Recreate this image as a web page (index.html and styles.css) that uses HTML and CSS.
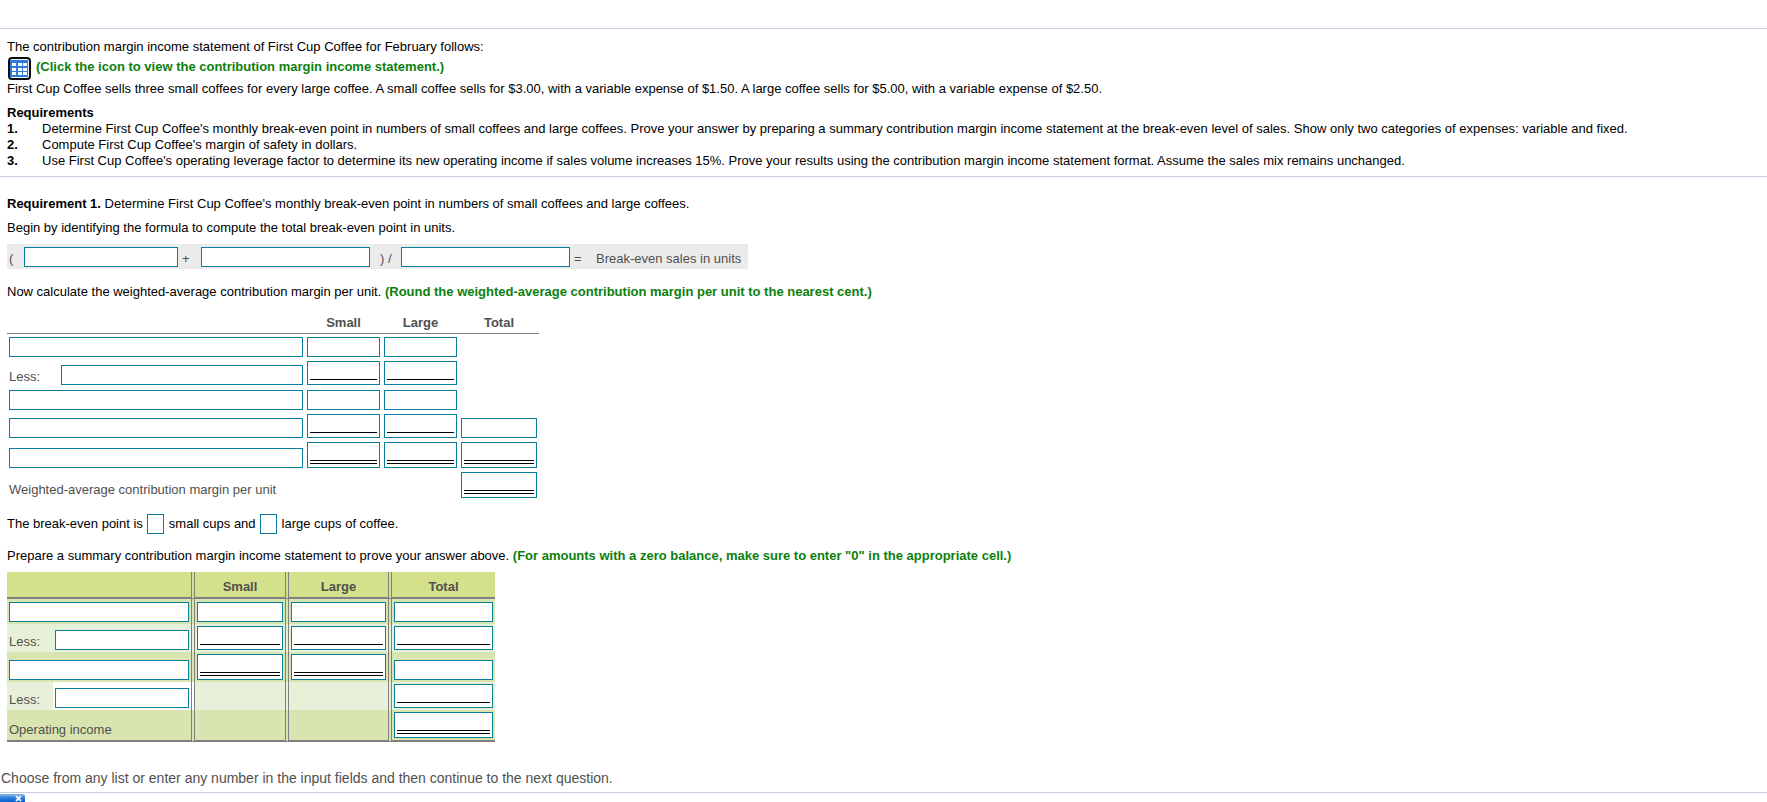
FILE: index.html
```html
<!DOCTYPE html>
<html lang="en">
<head>
<meta charset="utf-8">
<title>First Cup Coffee</title>
<link rel="stylesheet" href="styles.css">
</head>
<body>
<header class="topbar"></header>
<main>
<section class="problem">
  <p>The contribution margin income statement of First Cup Coffee for February follows:</p>
  <a class="statement-link" href="#statement">
    <svg width="23" height="23" viewBox="0 0 23 23" aria-hidden="true">
      <rect x="1" y="1" width="21" height="21" rx="3" fill="#eef4ff" stroke="#0b0d12" stroke-width="2"/>
      <rect x="2" y="3" width="18" height="17" rx="1" fill="#2f7bdc"/>
      <path d="M4 6h4v3H4zM10 6h4v3h-4zM15 6h4v3h-4zM4 11h4v3H4zM10 11h4v3h-4zM15 11h4v3h-4zM4 15h4v3H4zM10 15h4v3h-4zM15 15h4v3h-4z" fill="#fff"/>
    </svg>
    <span>(Click the icon to view the contribution margin income statement.)</span>
  </a>
  <p>First Cup Coffee sells three small coffees for every large coffee. A small coffee sells for $3.00, with a variable expense of $1.50. A large coffee sells for $5.00, with a variable expense of $2.50.</p>
  <h2>Requirements</h2>
  <ol class="requirements">
    <li><b>1.</b><span>Determine First Cup Coffee's monthly break-even point in numbers of small coffees and large coffees. Prove your answer by preparing a summary contribution margin income statement at the break-even level of sales. Show only two categories of expenses: variable and fixed.</span></li>
    <li><b>2.</b><span>Compute First Cup Coffee's margin of safety in dollars.</span></li>
    <li><b>3.</b><span>Use First Cup Coffee's operating leverage factor to determine its new operating income if sales volume increases 15%. Prove your results using the contribution margin income statement format. Assume the sales mix remains unchanged.</span></li>
  </ol>
</section>
<section class="work">
  <p><b>Requirement 1.</b> Determine First Cup Coffee's monthly break-even point in numbers of small coffees and large coffees.</p>
  <p>Begin by identifying the formula to compute the total break-even point in units.</p>
  <div class="formula">
    <span class="open">(</span>
    <input class="box first" aria-label="First term">
    <span class="plus">+</span>
    <input class="box" aria-label="Second term">
    <span class="divide">) /</span>
    <input class="box" aria-label="Divisor">
    <span class="equals">=</span>
    <span class="result">Break-even sales in units</span>
  </div>
  <p class="lead">Now calculate the weighted-average contribution margin per unit. <b class="hint">(Round the weighted-average contribution margin per unit to the nearest cent.)</b></p>

  <table class="average">
    <colgroup><col class="less"><col class="name"><col class="num"><col class="num"><col class="total"></colgroup>
    <thead><tr><th colspan="2"></th><th>Small</th><th>Large</th><th>Total</th></tr></thead>
    <tbody>
      <tr class="plain"><td colspan="2"><input class="box" aria-label="Row 1 item"></td><td><input class="box" aria-label="Row 1 small"></td><td><input class="box" aria-label="Row 1 large"></td><td></td></tr>
      <tr class="single"><td>Less:</td><td><input class="box" aria-label="Row 2 item"></td><td><div class="sum"><input aria-label="Row 2 small"></div></td><td><div class="sum"><input aria-label="Row 2 large"></div></td><td></td></tr>
      <tr class="plain"><td colspan="2"><input class="box" aria-label="Row 3 item"></td><td><input class="box" aria-label="Row 3 small"></td><td><input class="box" aria-label="Row 3 large"></td><td></td></tr>
      <tr class="single"><td colspan="2"><input class="box" aria-label="Row 4 item"></td><td><div class="sum"><input aria-label="Row 4 small"></div></td><td><div class="sum"><input aria-label="Row 4 large"></div></td><td><input class="box" aria-label="Row 4 total"></td></tr>
      <tr class="final"><td colspan="2"><input class="box" aria-label="Row 5 item"></td><td><div class="sum grand"><input aria-label="Row 5 small"></div></td><td><div class="sum grand"><input aria-label="Row 5 large"></div></td><td><div class="sum grand"><input aria-label="Row 5 total"></div></td></tr>
      <tr class="final"><td colspan="2">Weighted-average contribution margin per unit</td><td></td><td></td><td><div class="sum grand"><input aria-label="Weighted-average contribution margin per unit"></div></td></tr>
    </tbody>
  </table>

  <div class="sentence">
    <label for="small-cups">The break-even point is</label>
    <input class="box" id="small-cups">
    <label for="large-cups">small cups and</label>
    <input class="box" id="large-cups">
    <span>large cups of coffee.</span>
  </div>
  <p class="prepare">Prepare a summary contribution margin income statement to prove your answer above. <b class="hint">(For amounts with a zero balance, make sure to enter "0" in the appropriate cell.)</b></p>

  <table class="summary">
    <colgroup><col class="less"><col class="name"><col class="small"><col class="large"><col class="total"></colgroup>
    <thead><tr><th colspan="2"></th><th>Small</th><th>Large</th><th>Total</th></tr></thead>
    <tbody>
      <tr class="plain"><td colspan="2"><input class="box" aria-label="Line 1 item"></td><td><input class="box" aria-label="Line 1 small"></td><td><input class="box" aria-label="Line 1 large"></td><td><input class="box" aria-label="Line 1 total"></td></tr>
      <tr class="single"><td class="joined">Less:</td><td><input class="box" aria-label="Line 2 item"></td><td><div class="sum"><input aria-label="Line 2 small"></div></td><td><div class="sum"><input aria-label="Line 2 large"></div></td><td><div class="sum"><input aria-label="Line 2 total"></div></td></tr>
      <tr class="final"><td colspan="2"><input class="box" aria-label="Line 3 item"></td><td><div class="sum grand"><input aria-label="Line 3 small"></div></td><td><div class="sum grand"><input aria-label="Line 3 large"></div></td><td><input class="box" aria-label="Line 3 total"></td></tr>
      <tr class="single"><td class="joined">Less:</td><td class="blank"><input class="box" aria-label="Line 4 item"></td><td></td><td></td><td><div class="sum"><input aria-label="Line 4 total"></div></td></tr>
      <tr class="final"><td colspan="2">Operating income</td><td></td><td></td><td><div class="sum grand"><input aria-label="Operating income"></div></td></tr>
    </tbody>
  </table>
</section>
</main>
<footer class="status">Choose from any list or enter any number in the input fields and then continue to the next question.</footer>
<svg class="tab" width="25" height="8" viewBox="0 0 25 8" aria-hidden="true">
  <defs><linearGradient id="blue" x2="0" y2="1"><stop offset="0" stop-color="#8db9ea"/><stop offset=".5" stop-color="#2b7bd8"/><stop offset="1" stop-color="#0b62cf"/></linearGradient></defs>
  <path d="M0 0h23q2 0 2 2v6H0z" fill="url(#blue)"/>
  <path d="M16 2l5 5M21 2l-5 5" stroke="#e8f2ff" stroke-width="2"/>
</svg>
</body>
</html>
```
FILE: styles.css
```css
* { box-sizing: border-box; }
body {
  margin: 0;
  background: #fff;
  color: #000;
  font: 13px/16px "Liberation Sans", Arial, sans-serif;
  overflow: hidden;
}
p, h2, ol { margin: 0; }
h2 { font-size: 13px; }

.topbar { height: 29px; border-bottom: 1px solid #c8cde0; }
.problem { padding: 10px 7px 7px; border-bottom: 1px solid #c8cde0; }
.statement-link {
  display: flex;
  gap: 5px;
  margin: 2px 0 1px 1px;
  color: #0c800c;
  font-weight: bold;
  text-decoration: none;
}
.statement-link span { padding-top: 2px; }
.problem h2 { margin-top: 8px; }
.requirements { padding: 0; list-style: none; }
.requirements li { display: flex; }
.requirements b { flex: none; width: 35px; }

.work { padding: 19px 7px 0; }
.work > p + p { margin-top: 8px; }
.hint { color: #0c800c; }

input { min-width: 0; margin: 0; padding: 0 2px; border: 0; background: #fff; font: inherit; }
.box { display: block; width: 100%; height: 20px; border: 1px solid #0a7f9c; }

.formula {
  display: flex;
  width: max-content;
  margin-top: 8px;
  padding: 3px 7px 2px 2px;
  background: #ebebeb;
  color: #505050;
}
.formula span { padding-top: 4px; }
.formula .open { width: 15px; }
.formula .box { width: 169px; }
.formula .first { width: 154px; }
.formula .plus { width: 23px; padding-left: 4px; }
.formula .divide { width: 31px; padding-left: 10px; }
.formula .equals { width: 26px; padding-left: 4px; }
.work .lead { margin-top: 15px; }

table { border-collapse: separate; border-spacing: 0; table-layout: fixed; color: #505050; }
th, td { height: 25px; padding: 0 2px 2px; text-align: center; vertical-align: bottom; }
td { text-align: left; }
.single td { height: 28px; }
.final td { height: 30px; }
.sum { height: 24px; padding: 0 2px 4px; border: 1px solid #0a7f9c; background: #fff; }
.sum input { display: block; width: 100%; height: 100%; border-bottom: 1px solid #000; }
.grand { height: 26px; padding-bottom: 3px; }
.grand input { border-bottom: 4px double #000; }

.average { width: 532px; margin-top: 9px; }
.average th { border-bottom: 1px solid #808080; }
.average .less { width: 52px; }
.average .name { width: 246px; }
.average .num { width: 77px; }
.average .total { width: 80px; }

.sentence { display: flex; align-items: center; margin-top: 14px; }
.sentence .box { width: 17px; margin: 0 5px 0 4px; }
.work .prepare { margin: 14px 0 8px; }

.summary { width: 488px; }
.summary .less { width: 46px; }
.summary .name { width: 142px; }
.summary .small { width: 94px; }
.summary .large, .summary .total { width: 103px; }
.summary th, .summary td { border-right: 4px double #808080; }
.summary th:last-child, .summary td:last-child, .summary .joined { border-right: 0; }
.summary th { height: 27px; border-bottom: 2px solid #808080; background: #d5e18a; }
.summary tbody tr { background: #d9e5b0; }
.summary tbody tr:nth-child(even) { background: #e7f0d8; }
.summary .blank { background: #fff; }
.summary tbody tr:last-child td { height: 32px; border-bottom: 2px solid #808080; }

.status {
  margin-top: 28px;
  padding: 0 1px 6px;
  border-bottom: 1px solid #c8cde0;
  color: #505050;
  font-size: 14px;
}
.tab { display: block; margin-top: 1px; }
```
